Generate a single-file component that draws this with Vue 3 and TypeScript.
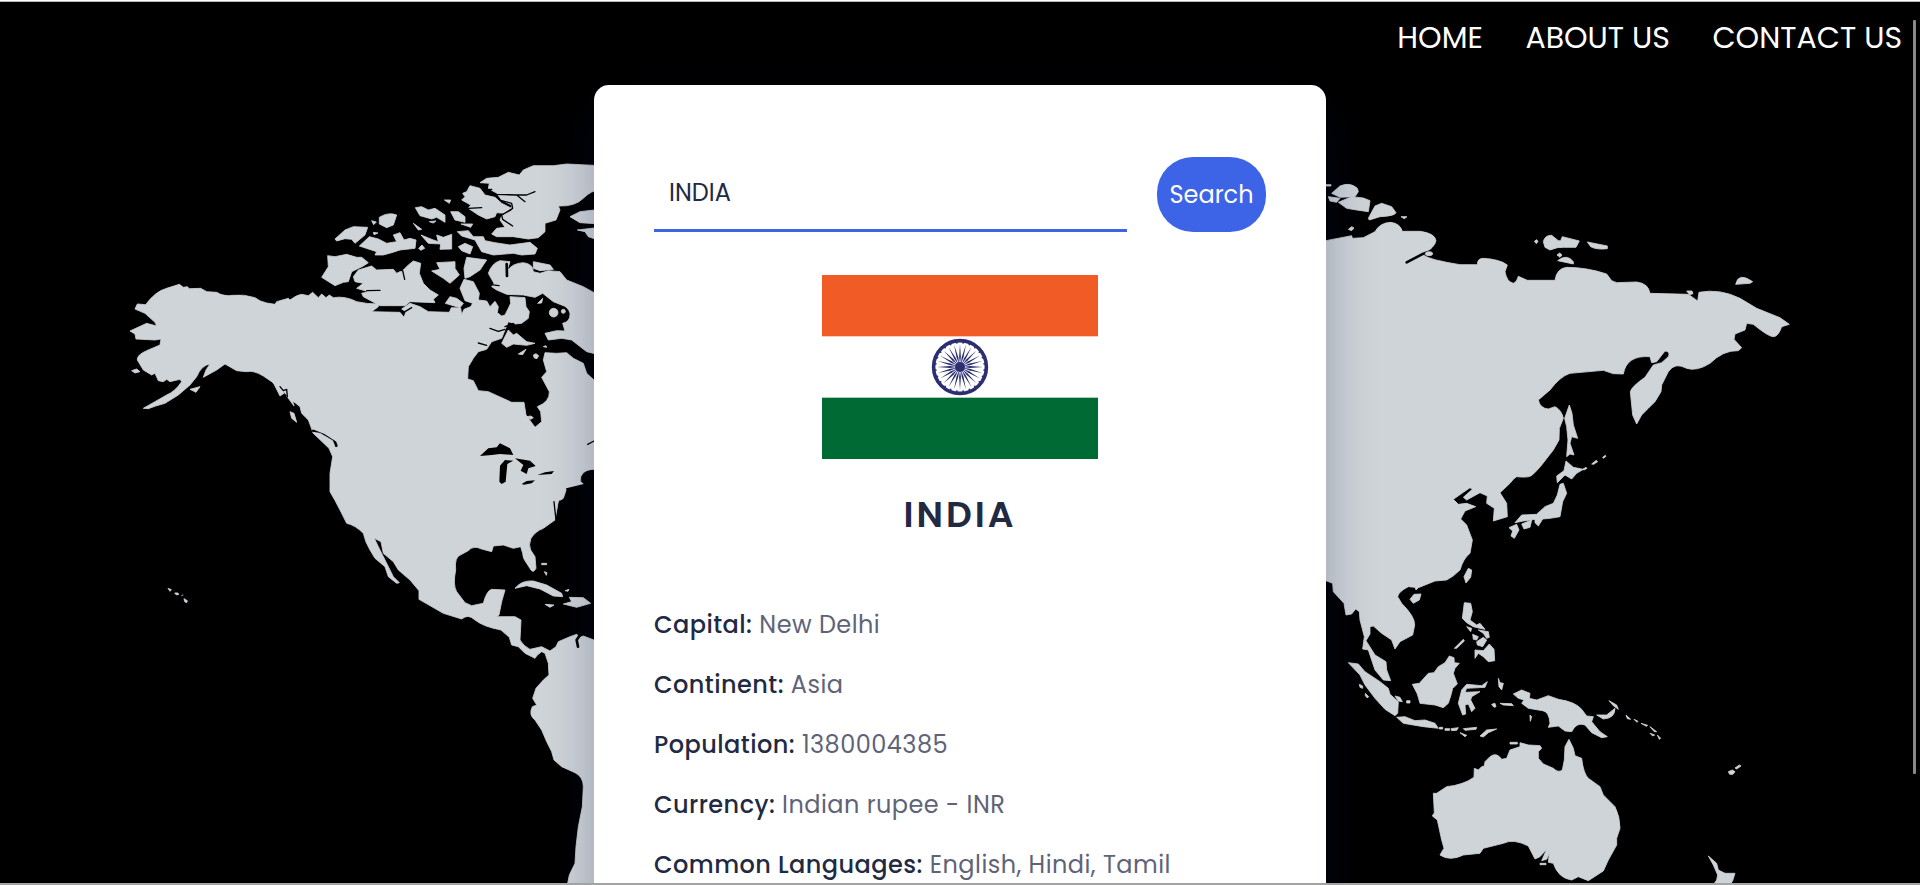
<script setup lang="ts">
import { ref } from 'vue'

interface Fact { label: string; value: string }

const query = ref('INDIA')

const links: string[] = ['HOME', 'ABOUT US', 'CONTACT US']

const facts: Fact[] = [
  { label: 'Capital:', value: 'New Delhi' },
  { label: 'Continent:', value: 'Asia' },
  { label: 'Population:', value: '1380004385' },
  { label: 'Currency:', value: 'Indian rupee - INR' },
  { label: 'Common Languages:', value: 'English, Hindi, Tamil' },
]

const spokes = Array.from({ length: 24 }, (_, i) => i * 15)
</script>

<template>
  <div class="page">
    <svg class="map" viewBox="0 0 1920 885" aria-hidden="true">
      <g transform="translate(100 140) scale(.33333)">
        <g class="land">
          <path d="M105 507L112 492 137 494Q165 455 200 445L238 433 250 442 262 440 268 446 302 445 320 455 350 457Q370 470 400 466T465 473Q480 485 500 489L525 493 530 485 565 475 570 480Q590 465 605 463L625 467 638 457 655 473 665 462 678 473 688 465 700 473Q735 467 770 485 800 492 835 492L835 500 815 515 900 517 912 532 918 515 905 507 930 490 960 500 985 515 1048 517 1054 503 1082 504 1085 524 1092 508 1112 500 1118 490 1095 482 1080 445 1092 418 1120 425 1138 460 1135 480 1160 483 1170 500 1185 484 1195 500 1192 518 1205 528 1215 525 1225 505 1232 490 1230 470 1275 473 1278 500 1288 515 1285 535 1265 550 1245 552 1225 545 1215 570 1205 595 1175 605 1160 628 1135 635 1120 655 1105 680 1103 717 1120 722 1135 752 1165 755 1235 787 1272 787 1278 825 1305 862 1325 845 1322 815 1312 800Q1350 785 1348 755L1325 712 1340 695 1330 660 1335 638 1370 640 1400 638 1420 655 1450 670 1460 700 1482 720 1500 725 1500 988Q1465 985 1450 998 1438 1010 1442 1025L1450 1032 1400 1045 1390 1075 1375 1085 1365 1140 1330 1165Q1305 1175 1293 1195 1285 1215 1292 1230L1305 1250 1308 1285Q1300 1300 1293 1290L1280 1270Q1268 1255 1268 1240L1262 1220 1240 1225 1210 1215 1180 1218 1175 1235 1145 1227Q1120 1215 1105 1232L1085 1243Q1062 1250 1067 1290 1058 1335 1070 1355L1095 1388 1115 1397 1150 1390Q1160 1352 1175 1348L1215 1350 1205 1385 1197 1425 1190 1430 1245 1430 1263 1440 1260 1500Q1270 1518 1290 1528L1325 1520 1350 1533 1368 1520 1375 1505 1410 1490 1430 1483 1440 1492 1450 1488 1482 1500 1500 1505 1500 2235 1402 2235 1408 2205 1425 2170 1428 2120 1435 2060 1447 2000 1450 1940Q1450 1910 1425 1898L1385 1880 1362 1860 1355 1835 1340 1805 1325 1770 1305 1740Q1285 1725 1297 1700L1310 1695 1298 1675 1308 1645 1330 1620 1347 1605 1345 1570 1335 1540 1325 1535 1312 1545 1305 1555 1275 1540 1255 1520 1235 1515 1228 1492 1203 1470Q1150 1460 1125 1440 1105 1420 1085 1437L1030 1420 957 1378 957 1352 930 1320 895 1290 880 1265 850 1240 843 1205 823 1195 835 1220 860 1270 880 1310 898 1328 890 1330 865 1310 855 1280 825 1255 810 1230Q795 1205 790 1180 765 1155 740 1150L720 1110Q705 1080 690 1055L690 1000 698 950 687 925 640 880 625 840 605 820 600 800 575 780 545 750 515 725 490 708Q460 690 440 695L410 692 375 672 350 690 310 712 318 690 330 672Q305 675 290 710L270 735 235 765 195 790Q165 798 145 806L130 805 165 785 200 765Q225 755 245 725L240 718 210 725 200 718 190 725 175 722 165 700 155 705 130 690 112 660Q110 645 140 632L180 615 183 597 165 600 108 597 105 582 90 573 140 550 170 558 165 547 135 520z" />
          <path d="M1140 128L1160 115 1195 112 1225 97 1258 105 1270 90 1300 77 1360 77 1400 72 1500 77 1500 150Q1475 150 1450 175T1375 198L1380 210 1368 240 1335 250 1335 275 1315 293 1285 297 1240 290 1190 290 1175 282 1190 265 1215 262 1200 240 1205 228 1235 212 1235 195 1205 180 1190 160 1165 145 1168 130z" />
          <path d="M1110 137L1140 145 1155 165 1185 172 1205 190 1235 205 1215 220 1190 218 1185 230 1160 237 1135 225 1105 205 1112 195 1085 180 1095 170 1088 160 1100 155z" />
          <path d="M1165 400Q1175 370 1200 362L1230 365 1220 395Q1235 370 1270 368 1300 372 1300 395L1320 400 1345 392 1380 395 1400 420 1450 440 1482 458 1500 460 1500 645 1460 635 1415 600 1385 595 1345 600 1335 580 1370 572 1395 573 1388 550Q1412 545 1410 520 1405 500 1385 495L1360 485 1328 460 1305 472 1270 465 1220 463 1190 450 1175 440 1182 430z" />
          <path d="M760 410L775 390 815 378 830 390 880 388 890 400 910 390 925 375 940 363 962 370 958 400 970 430 990 450 1015 465 1000 478 1005 488 930 485 915 497 840 497 790 470 785 460 805 455 770 445 790 430 765 425z" />
          <path d="M683 347L705 350 740 343 770 352 785 352 805 368 790 378 755 395 745 425 730 427 705 437 665 412 685 380z" />
          <path d="M778 318L808 290 835 297 860 310 890 305 880 285 900 278 912 300 930 295 948 300 945 325 900 330 875 338 850 345 825 345 830 335z" />
          <path d="M705 297L735 270 760 260 803 262 795 285 765 310 755 298 735 296 710 303z" />
          <path d="M838 232Q865 215 890 225L880 255 860 263 838 252zM815 242l14 4-8 8zM820 277l14 2-12 5z" />
          <path d="M946 203L965 200 985 210 1005 205 1035 225 1035 247 1010 232 995 237 960 227zM1052 215L1075 215 1095 230 1095 247 1065 240zM940 250L965 268 955 270zM1083 252L1118 252 1112 262zM1033 180L1052 180 1048 190zM988 245l20-2-8 6z" />
          <path d="M963 285L1000 300 1015 305 1010 285 1030 292 1055 283 1055 327 1020 328 1022 312 985 310zM956 325l10-10 8 10-12 6zM1075 320L1095 310 1118 320 1110 342 1085 332z" />
          <path d="M1072 275L1105 272 1120 290 1150 290 1155 302 1185 308 1230 315 1290 307 1312 325 1305 342 1265 345 1240 340 1180 345 1145 335 1125 300 1085 288z" />
          <path d="M995 393L1020 388 1010 368 1065 365 1065 385 1078 405 1050 430 1030 415zM1100 352L1160 360 1140 390 1110 410 1095 415 1092 385zM1300 365L1350 375 1360 388 1320 392 1300 385z" />
          <path d="M1410 230L1440 215 1500 208 1500 252 1440 248zM1432 270L1500 262 1500 302 1465 290 1455 275z" />
          <path d="M1036 490L1050 470 1070 475 1090 490 1080 503z" />
          <circle cx="1361" cy="518" r="13" /><circle cx="1390" cy="514" r="6" />
          <path d="M1205 610L1225 570 1240 585 1250 580 1280 605 1305 610 1280 616 1240 612 1220 622zM1255 642L1278 628 1268 644zM1300 645l8-4 8 6-5 9-8-2zM1313 490l15-15-3 14zM1330 620l8-3 2 5z" />
          <path d="M270 748L300 740 288 757zM95 692L110 687 120 695 105 699zM520 728L540 735 552 760 540 768zM560 768L575 770 582 798zM570 815L582 820 590 847 575 835z" />
          <g transform="translate(600 780)">
            <path d="M645 565Q665 540 700 543L740 555 785 580 788 590 760 588 720 567 680 557zM790 612L815 605 808 592 850 593 872 610 830 622zM735 613L762 615 750 622zM725 490h15v4h-15zM733 515l8 3-2 8zM795 572l12-4-3 6z" />
          </g>
          <path d="M204 1345l10 4-4 5zM224 1359l10 0 2 5-8 0zM244 1367l6-2M252 1376l10 6-2 6-6-3z" />
        </g>
        <g class="sea" transform="translate(600 780)">
          <path d="M540 168L565 145 590 142 600 130 630 145 640 165 600 162 575 165zM600 197L615 180 640 182 622 192 617 245 605 252 598 245zM645 175L690 182 707 198 685 205 680 222 662 212 670 195zM665 252L680 243 705 241 695 250 672 254zM712 225L735 217 762 213 755 222z" />
        </g>
        <g class="channels">
          <path d="M1165 152L1190 163 1250 165 1280 165 1305 155M1250 165L1275 185M1205 182L1235 190 1238 205 1205 225 1208 238 1238 258M1155 150l20-2M890 390L908 392 914 418M800 452L840 451M1170 565L1195 574 1215 568M1135 609L1160 616M1172 434L1197 437M1215 560L1240 550 1256 576M915 515L935 503M540 740L550 752 560 748 562 770M1463 913L1482 903M1362 1085L1368 1140M1400 1047L1450 1035M1105 205L1145 203M1380 1083l-4 20" />
          <path class="wide" d="M1220 372L1221 408M1438 1488L1430 1500 1434 1520M640 873L670 885 705 907 709 917" />
        </g>
        <path class="land" d="M1280 830l12-2 8 5-8 5zM638 877L660 880 698 902 702 915 698 922 665 900z" />
      </g>

      <g transform="translate(1320 170) scale(.33333)">
        <g class="land">
          <path d="M0 212L18 212 95 197 97 205 130 203 165 185Q180 158 212 157 240 160 247 184L300 184Q345 190 348 212 345 230 310 255 330 270 420 284L472 284Q472 265 490 265 540 268 562 285L555 305Q560 335 580 340 590 338 595 319L622 331 705 331Q710 295 740 292 800 292 860 312L875 332 890 338 950 336Q985 340 990 370L1105 373 1133 393 1137 367Q1200 355 1260 385L1310 415 1380 443 1408 463 1385 470Q1375 500 1360 500T1300 463L1280 460 1275 480 1245 492 1242 508 1265 533 1255 542Q1210 540 1170 580 1130 605 1100 595 1065 575 1045 605L1025 645 1023 665 1005 695 985 715 965 735 950 762 938 735 931 665Q935 650 975 622L1000 585 1025 578 1045 560Q1052 545 1035 543L1010 575 995 578 990 560Q920 555 910 612L880 611 850 601 750 610Q720 620 690 660L655 690Q660 715 685 717L705 710Q725 720 730 745L718 775 717 810 700 840 665 885Q640 915 630 919T590 920Q580 925 570 940L540 968 560 1000 562 1040 520 1053 523 1015 500 1000 502 978 480 968 440 990 430 982 457 958 450 953 430 967 400 988 415 1003 440 1000 467 1010 435 1023 422 1047 440 1065 457 1110 450 1150Q430 1165 420 1200 400 1220 380 1230L345 1233 295 1253 288 1260 285 1252 265 1250Q235 1265 233 1280L245 1300Q285 1340 284 1365L278 1395 240 1415 225 1437 215 1410 185 1390 160 1368 150 1370 150 1392 138 1412 165 1455 198 1475 200 1500 212 1532 190 1530 165 1500 145 1440 128 1437 133 1400 120 1350 118 1325 107 1317 95 1332 78 1335 72 1300 40 1265 38 1240 18 1232 0 1232z" />
          <path d="M35 70L60 48Q90 35 112 55L115 65 105 80 60 82zM55 97L95 80 130 84 150 92 145 125 110 120 80 115zM25 80L60 85 50 97 30 93zM145 145L165 108 185 100 215 110 228 128Q225 138 180 140L148 150zM243 140l18 0-8 6zM85 178l10-8 7 4-7 8zM18 44h15v4H18z" />
          <path d="M643 214l7-5 4 5-5 7zM670 215Q675 195 695 196L715 212 722 212 727 200 778 213 768 232 730 232 712 233 690 240 675 232zM802 216L862 228 862 236Q830 240 812 230zM711 255l8-6 7 6-6 7zM713 272Q740 250 760 275L760 282zM1247 343Q1255 305 1298 335L1290 340zM1100 363h16l3 8-10 3z" />
          <path d="M748 705L756 730 760 765 773 805 755 800 750 820 762 855 750 852 740 860 744 810 740 770 734 745z" />
          <g transform="translate(0 810)">
            <path d="M738 63L760 82 790 88 770 100 755 117 735 105 712 128 710 108 732 92zM720 133L730 130 740 160 728 185 720 230 690 235 668 237 655 258 645 248 645 238 610 243 585 248 605 225 650 223 675 200 700 190 712 165zM605 252L635 240 630 262 612 267zM567 263L590 253 597 270 583 295 573 288 578 273zM788 88l10-6 3 3-9 5zM815 72l14-11 4 4-12 8zM848 52l8-6 2 3-8 6z" />
            <path d="M445 385L455 390 452 412 438 429 432 410zM270 478L282 463 303 462 298 480 280 490zM433 488L452 490 457 515 450 540 470 555 480 550 495 568 480 565 460 560 440 548 427 535zM440 560l15 5-3 10zM403 625L430 598 433 603 410 625z" />
            <path d="M458 583L475 590 470 600 460 598zM475 570L505 575 508 592 500 595 490 580zM470 605L490 592 500 600 488 620 472 615zM465 655L465 630 490 632 508 612 522 628 524 662 505 665 490 650 475 640z" />
            <path d="M85 668L115 672 135 695 180 725 205 745 210 763 235 785 233 820 225 827 195 808 165 775 135 735 120 705zM277 733L298 730 325 700 342 698 355 680 375 668 388 648 402 653 403 668 418 670 405 685 400 700 412 732 398 745 393 765 385 790 370 803 345 795 300 790 292 762z" />
            <path d="M230 832L255 830 285 842 315 840 345 850 355 865 310 860 250 850zM358 862h10v5h-10zM375 866h14v5h-14zM393 866L415 863 410 871 395 872zM430 866L470 862 468 868 435 871zM420 878L440 886 435 890zM480 888L500 870 530 867 505 878 490 891z" />
            <path d="M425 750L440 733 485 737 502 725 495 742 440 745 435 757 480 755 455 770 452 780 465 805 455 815 445 792 435 795 437 822 428 825 415 790zM535 715L540 728 550 730 545 750 537 740zM515 793l10-3 3 10-6 2zM540 790L575 791 580 797 550 795zM630 825l5 5-4 14z" />
            <path d="M580 762L605 750 630 760 628 775 650 780 685 767 715 778Q765 785 785 808L800 828 820 830 815 845 840 875 862 890 845 893 815 878 795 855Q770 845 755 875L735 873 715 858 685 862 690 850Q688 815 668 812L625 805 605 790 612 780 595 775zM830 825L860 825 885 805Q885 835 850 837zM867 782L890 795 895 808 880 797zM918 825L932 838 922 836zM942 838l12 6-3 3zM963 850l20 6-4 3zM990 860L1010 875 1003 875zM990 880l14 5-6 3zM1012 885l10 10-4 3z" />
            <path d="M118 733l10 5 0 7-8-3zM136 760l10 10-4 4-6-7zM225 768L240 772 247 785 235 783zM260 782h10v7h-10zM570 907h22v5h-22z" />
            <path d="M340 1060L350 1060 380 1040Q430 1035 462 1012L463 985 475 990 485 980 493 978 495 965 510 950Q530 935 545 958L560 955 570 930 600 920 600 908 625 915 660 917 665 925 655 935 655 955 670 972 700 985Q715 1000 727 990L733 960 735 920 747 898 760 925 765 947 785 955Q790 1000 805 1015L840 1040 850 1065 885 1100Q900 1130 900 1165L890 1195 890 1215 865 1260 850 1293 805 1322 775 1310 755 1320Q715 1315 700 1270L685 1267 688 1240 680 1258 665 1262 680 1228 660 1250 645 1257 625 1218Q580 1195 550 1210L490 1225 480 1240 430 1245Q390 1265 360 1245L372 1225 365 1200 352 1140 337 1128 343 1118zM660 1270h18v4h-18z" />
            <path d="M1225 995l12-5 8 5-6 8-10 0zM1245 984L1258 975 1263 978 1250 987zM1165 1248L1190 1270 1195 1290 1215 1300 1245 1300 1238 1322 1230 1335 1180 1335 1190 1320 1193 1305 1180 1275z" />
          </g>
        </g>
        <g class="channels"><path class="wide" d="M260 277L310 251 340 241" /></g>
        <ellipse class="land" cx="327" cy="251" rx="11" ry="6" />
      </g>
    </svg>

    <nav class="nav">
      <a v-for="link in links" :key="link">{{ link }}</a>
    </nav>

    <main class="card">
      <form class="search" @submit.prevent>
        <input v-model="query" class="field" type="text" aria-label="Country">
        <button class="button" type="submit">Search</button>
      </form>

      <svg class="flag" viewBox="0 0 276 184" role="img" aria-label="Flag">
        <rect width="276" height="184" fill="#fff" />
        <rect width="276" height="61.33" fill="#f15b25" />
        <rect y="122.67" width="276" height="61.33" fill="#006a34" />
        <g transform="translate(138 92)">
          <circle r="26.4" fill="none" stroke="#2b2e70" stroke-width="3.6" />
          <path v-for="angle in spokes" :key="angle" d="M0-3L-.9-10 0-23 .9-10z" fill="#2b2e70" :transform="`rotate(${angle})`" />
          <circle v-for="angle in spokes" :key="`dot-${angle}`" cx="0" cy="-24.4" r="0.9" fill="#2b2e70" :transform="`rotate(${angle + 7.5})`" />
          <circle r="5" fill="#2b2e70" />
        </g>
      </svg>

      <h2 class="title">INDIA</h2>

      <ul class="facts">
        <li v-for="fact in facts" :key="fact.label" class="fact">
          <span class="label">{{ fact.label }}</span>&#32;<span class="value">{{ fact.value }}</span>
        </li>
      </ul>
    </main>

    <div class="edge top"></div>
    <div class="edge bottom"></div>
    <div class="scrollbar"></div>
  </div>
</template>

<style>
body {
  margin: 0;
  overflow: hidden;
  background: #000;
}
</style>

<style scoped>
.page {
  position: relative;
  width: 1920px;
  height: 885px;
  overflow: hidden;
  background: #000;
  font-family: Poppins, Inter, sans-serif;
}

.map {
  position: absolute;
  inset: 0;
  width: 1920px;
  height: 885px;
}

.land {
  fill: #cfd4d8;
  stroke: #cfd4d8;
  stroke-width: 2.5;
  stroke-linejoin: round;
}

.sea { fill: #000; }

.channels {
  fill: none;
  stroke: #000;
  stroke-width: 4;
  stroke-linecap: round;
  stroke-linejoin: round;
}

.wide { stroke-width: 8; }

.nav {
  position: relative;
  display: flex;
  justify-content: flex-end;
  gap: 42.5px;
  height: 75px;
  padding-right: 18px;
  color: #fff;
  font-size: 30px;
  line-height: 75px;
}

.card {
  position: relative;
  box-sizing: border-box;
  width: 732px;
  height: 900px;
  margin: 10px auto 0;
  padding: 72px 60px 0;
  border-radius: 15px;
  background: #fff;
  box-shadow: 0 20px 50px rgba(8, 21, 75, 0.28);
}

.search {
  display: flex;
  justify-content: space-between;
  height: 75px;
}

.field {
  box-sizing: border-box;
  width: 473px;
  height: 75px;
  padding: 0 15px 1px;
  border: 0;
  border-bottom: 3px solid #3d64e6;
  outline: none;
  background: transparent;
  color: #222a43;
  font: inherit;
  font-size: 24px;
}

.button {
  width: 109px;
  height: 75px;
  padding: 0;
  border: 0;
  border-radius: 36px;
  background: #3d64e6;
  color: #fff;
  font: inherit;
  font-size: 24px;
}

.flag {
  display: block;
  width: 276px;
  height: 184px;
  margin: 43px auto 0;
}

.title {
  height: 54px;
  margin: 29px 0 0;
  color: #222a43;
  font-size: 36px;
  font-weight: 600;
  letter-spacing: 3px;
  line-height: 54px;
  text-align: center;
}

.facts {
  margin: 53px 0 0;
  padding: 0;
  list-style: none;
}

.fact {
  height: 60px;
  font-size: 24px;
  letter-spacing: 0.45px;
  line-height: 60px;
  white-space: nowrap;
}

.label {
  color: #222a43;
  font-weight: 500;
}

.value { color: #5f6378; }

.edge {
  position: absolute;
  left: 0;
  width: 100%;
  height: 2px;
}

.top {
  top: 0;
  box-sizing: border-box;
  border-top: 1px solid #fff;
  background: #b5b9b9;
}

.bottom {
  bottom: 0;
  background: #a3a3a3;
}

.scrollbar {
  position: absolute;
  top: 20px;
  left: 1913px;
  width: 3px;
  height: 754px;
  border-radius: 1px;
  background: #888;
}
</style>
